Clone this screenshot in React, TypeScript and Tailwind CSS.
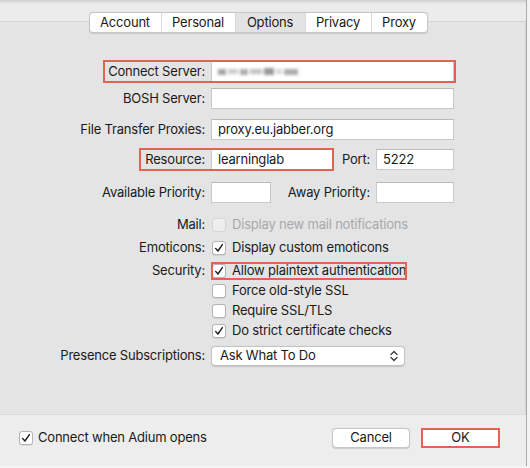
import React from 'react';

const font = { fontFamily: 'Inter, "Liberation Sans", Arial, sans-serif' };

const Check: React.FC<{ on?: boolean; disabled?: boolean }> = ({ on, disabled }) => (
  <span
    className={`flex h-[14px] w-[14px] shrink-0 items-center justify-center rounded-[3px] border ${
      disabled ? 'border-[#d6d6d6] bg-[#eeeeee]' : 'border-[#b4b4b4] bg-white shadow-[0_0.5px_0.5px_rgba(0,0,0,0.15)]'
    }`}
  >
    {on && (
      <svg width="10" height="10" viewBox="0 0 10 10">
        <path d="M1.6 5.4 L3.9 8 L8.4 1.6" fill="none" stroke="#1a1a1a" strokeWidth="1.4" strokeLinecap="round" strokeLinejoin="round" />
      </svg>
    )}
  </span>
);

const Field: React.FC<{ w: string; value?: string; blur?: boolean }> = ({ w, value, blur }) => (
  <div className={`${w} flex h-[21px] shrink-0 items-center border border-[#c9c9c9] border-t-[#b9b9b9] bg-white px-[6px] text-[13px] text-[#1a1a1a]`}>
    {blur ? (
      <span className="flex items-center gap-[2px] opacity-60 blur-[1.5px]">
        <span className="h-[6px] w-[8px] bg-[#666]" />
        <span className="h-[5px] w-[10px] bg-[#aaa]" />
        <span className="h-[6px] w-[8px] bg-[#777]" />
        <span className="h-[5px] w-[12px] bg-[#999]" />
        <span className="h-[7px] w-[10px] bg-[#555]" />
        <span className="h-[5px] w-[6px] bg-[#bbb]" />
        <span className="h-[6px] w-[14px] bg-[#777]" />
      </span>
    ) : (
      value
    )}
  </div>
);

const Label: React.FC<{ children: React.ReactNode }> = ({ children }) => (
  <div className="w-[205px] shrink-0 text-right text-[13px] text-[#1a1a1a]">{children}</div>
);

const CheckRow: React.FC<{ label?: string; text: string; on?: boolean; disabled?: boolean; mt: string }> = ({
  label,
  text,
  on,
  disabled,
  mt,
}) => (
  <div className={`flex h-[20px] items-center gap-[6px] ${mt}`}>
    <Label>{label ? `${label}:` : ''}</Label>
    <div className="flex items-center gap-[6px] pl-[1px]">
      <Check on={on} disabled={disabled} />
      <span className={`text-[13px] ${disabled ? 'text-[#a9a9a9]' : 'text-[#1a1a1a]'}`}>{text}</span>
    </div>
  </div>
);

const tabs = ['Account', 'Personal', 'Options', 'Privacy', 'Proxy'];
const tabW = ['w-[71px]', 'w-[74px]', 'w-[70px]', 'w-[66px]', 'w-[56px]'];

export default function App() {
  return (
    <div className="relative h-[468px] w-[530px] overflow-hidden bg-[#f4f4f4] tracking-[-0.2px]" style={font}>
      <div className="h-[466px] w-[527px] border-r border-b border-[#a9a9a9] bg-[#ececec]">
        <div className="h-[4px] bg-gradient-to-b from-[#cfcfcf] to-[#ececec]" />

        {/* tabs */}
        <div className="relative z-10 mt-[8px] flex justify-center pr-[10px]">
          <div className="flex h-[21px] overflow-hidden rounded-[4px] border border-[#c6c6c6] bg-white shadow-[0_0.5px_1px_rgba(0,0,0,0.12)]">
            {tabs.map((t, i) => (
              <div
                key={t}
                className={`${tabW[i]} flex items-center justify-center text-[13px] text-[#1a1a1a] ${
                  i > 0 ? 'border-l border-[#dadada]' : ''
                } ${t === 'Options' ? 'bg-[#e3e3e3]' : ''}`}
              >
                {t}
              </div>
            ))}
          </div>
        </div>

        {/* tab box */}
        <div className="-mt-[12px] h-[393px] border-t border-r border-[#d3d3d3] bg-[#e4e4e4] pt-[39px]">
          {/* Connect Server */}
          <div className="relative flex h-[21px] items-center gap-[6px]">
            <Label>Connect Server:</Label>
            <Field w="w-[243px]" blur />
            <div className="pointer-events-none absolute left-[103px] top-[-1px] h-[23px] w-[353px] border-2 border-[#e36256]" />
          </div>

          <div className="mt-[6px] flex h-[21px] items-center gap-[6px]">
            <Label>BOSH Server:</Label>
            <Field w="w-[243px]" />
          </div>

          <div className="mt-[10px] flex h-[21px] items-center gap-[6px]">
            <Label>File Transfer Proxies:</Label>
            <Field w="w-[243px]" value="proxy.eu.jabber.org" />
          </div>

          <div className="relative mt-[9px] flex h-[21px] items-center gap-[6px]">
            <Label>Resource:</Label>
            <Field w="w-[122px]" value="learninglab" />
            <span className="w-[31px] text-right text-[13px] text-[#1a1a1a]">Port:</span>
            <Field w="w-[78px]" value="5222" />
            <div className="pointer-events-none absolute left-[139px] top-[-1px] h-[23px] w-[195px] border-2 border-[#e36256]" />
          </div>

          <div className="mt-[12px] flex h-[21px] items-center gap-[6px]">
            <Label>Available Priority:</Label>
            <Field w="w-[60px]" />
            <span className="w-[93px] text-right text-[13px] text-[#1a1a1a]">Away Priority:</span>
            <Field w="w-[78px]" />
          </div>

          <CheckRow label="Mail" text="Display new mail notifications" disabled mt="mt-[12px]" />
          <CheckRow label="Emoticons" text="Display custom emoticons" on mt="mt-[3px]" />
          <div className="relative mt-[3px]">
            <CheckRow label="Security" text="Allow plaintext authentication" on mt="mt-0" />
            <div className="pointer-events-none absolute left-[211px] top-[1px] h-[18px] w-[196px] border-2 border-[#e36256]" />
          </div>
          <CheckRow text="Force old-style SSL" mt="mt-0" />
          <CheckRow text="Require SSL/TLS" mt="mt-0" />
          <CheckRow text="Do strict certificate checks" on mt="mt-0" />

          <div className="mt-[5px] flex h-[20px] items-center gap-[6px]">
            <Label>Presence Subscriptions:</Label>
            <div className="flex h-[20px] w-[194px] items-center justify-between rounded-[4px] border border-[#c4c4c4] bg-white pl-[8px] pr-[6px] text-[13px] text-[#1a1a1a] shadow-[0_0.5px_1px_rgba(0,0,0,0.15)]">
              <span>Ask What To Do</span>
              <svg width="8" height="12" viewBox="0 0 8 12">
                <path d="M1 4.5 L4 1.5 L7 4.5 M1 7.5 L4 10.5 L7 7.5" fill="none" stroke="#333" strokeWidth="1.2" strokeLinecap="round" strokeLinejoin="round" />
              </svg>
            </div>
          </div>
        </div>

        {/* footer */}
        <div className="flex h-[52px] items-center border-t border-[#dadada] bg-[#ededed] pb-[5px] pl-[19px] pr-[26px]">
          <div className="flex items-center gap-[5px]">
            <Check on />
            <span className="text-[13px] text-[#1a1a1a]">Connect when Adium opens</span>
          </div>
          <div className="ml-auto flex items-center gap-[11px]">
            <button className="flex h-[20px] w-[78px] items-center justify-center rounded-[4px] border border-[#c6c6c6] bg-white text-[13px] text-[#1a1a1a] shadow-[0_0.5px_1px_rgba(0,0,0,0.15)]">
              Cancel
            </button>
            <button className="flex h-[20px] w-[79px] items-center justify-center border-2 border-[#e36256] bg-white text-[13px] text-[#1a1a1a]">
              OK
            </button>
          </div>
        </div>
      </div>
    </div>
  );
}
